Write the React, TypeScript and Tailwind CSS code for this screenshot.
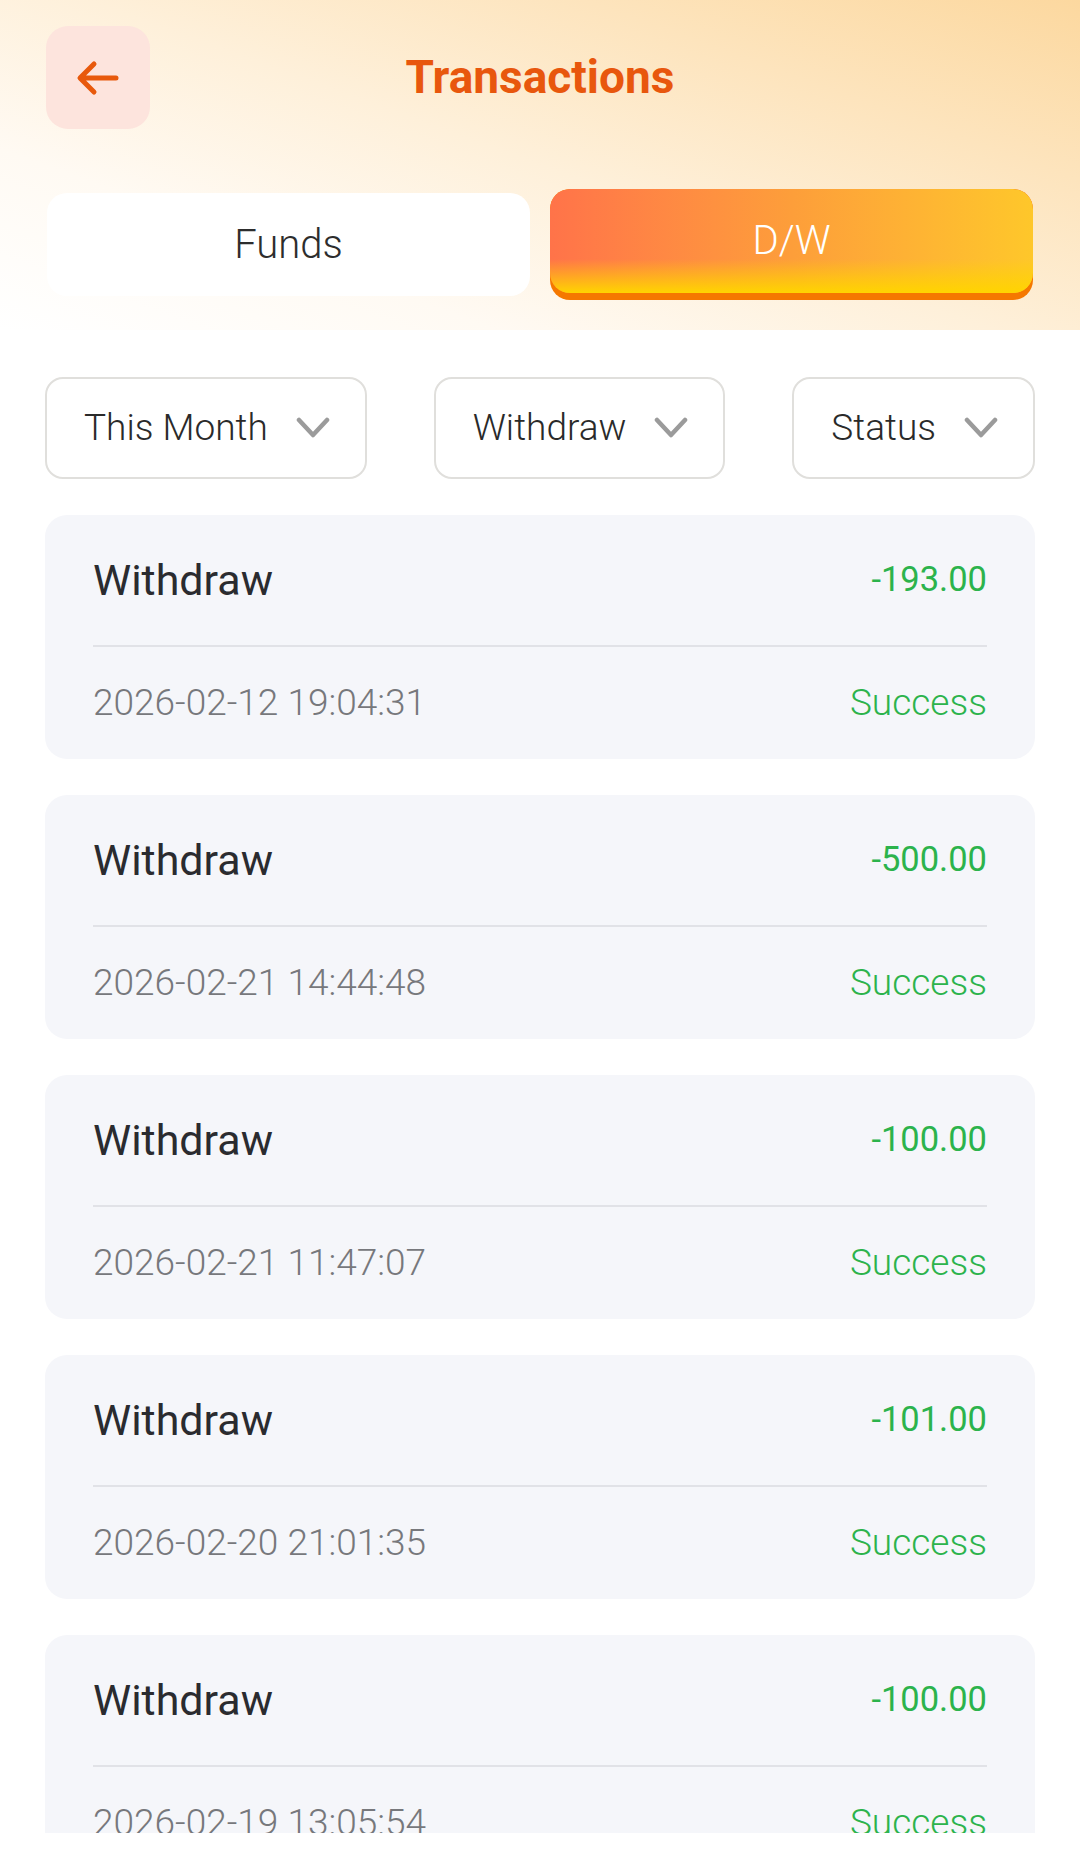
import React, { useState } from 'react';

type TRecord = {
  id: number;
  amount: string;
  date: string;
  status: string;
};

const records: TRecord[] = [
  { id: 1, amount: '-193.00', date: '2026-02-12 19:04:31', status: 'Success' },
  { id: 2, amount: '-500.00', date: '2026-02-21 14:44:48', status: 'Success' },
  { id: 3, amount: '-100.00', date: '2026-02-21 11:47:07', status: 'Success' },
  { id: 4, amount: '-101.00', date: '2026-02-20 21:01:35', status: 'Success' },
  { id: 5, amount: '-100.00', date: '2026-02-19 13:05:54', status: 'Success' },
];

function Chevron() {
  return (
    <svg width="34" height="22" viewBox="0 0 34 22" fill="none">
      <path
        d="M3 3 L17 18 L31 3"
        stroke="#9b9b9b"
        strokeWidth="4.5"
        strokeLinecap="round"
        strokeLinejoin="round"
      />
    </svg>
  );
}

function FilterSelect({ label }: { label: string }) {
  return (
    <button className="h-[102px] flex items-center gap-[28px] pl-[37px] pr-[35px] rounded-[18px] border-2 border-[#e0dfdc] bg-white">
      <span className="text-[37px] font-light text-[#2a2a2a]">{label}</span>
      <Chevron />
    </button>
  );
}

function RecordCard({ record }: { record: TRecord }) {
  return (
    <div className="shrink-0 h-[244px] rounded-[22px] bg-[#f5f6fa] px-[48px] flex flex-col">
      <div className="h-[130px] flex items-center justify-between">
        <span className="text-[43px] text-[#2a2b2f]">Withdraw</span>
        <span className="text-[34.5px] text-[#2cb34c]">{record.amount}</span>
      </div>
      <div className="h-[2px] bg-[#e1e2e7]"></div>
      <div className="h-[112px] flex items-center justify-between">
        <span className="text-[37px] font-light text-[#77787c]">
          {record.date}
        </span>
        <span className="text-[37px] font-light text-[#2cb34c]">
          {record.status}
        </span>
      </div>
    </div>
  );
}

export default function App() {
  const [tab, setTab] = useState<'funds' | 'dw'>('dw');

  return (
    <div className="w-[1080px] h-[1872px] bg-white overflow-hidden font-['Roboto','Liberation_Sans',sans-serif]">
      <header className="h-[330px] bg-[linear-gradient(200deg,#fcd89f_0%,#fde4bd_25%,#fef0da_50%,#fffaf3_75%,#ffffff_100%)]">
        <div className="pt-[26px] px-[46px] grid grid-cols-[104px_1fr_104px] items-center">
          <button className="w-[104px] h-[103px] rounded-[22px] bg-[#fde4dd] flex items-center justify-center">
            <svg width="44" height="36" viewBox="0 0 44 36" fill="none">
              <path
                d="M40 18 H5 M18 4 L4 18 L18 32"
                stroke="#e8590c"
                strokeWidth="5"
                strokeLinecap="round"
                strokeLinejoin="round"
              />
            </svg>
          </button>
          <h1 className="text-center text-[46px] font-bold text-[#e8570d]">
            Transactions
          </h1>
          <div></div>
        </div>
        <div className="mt-[60px] px-[47px] grid grid-cols-2 gap-[20px] items-start">
          <button
            onClick={() => setTab('funds')}
            className="mt-[4px] h-[103px] rounded-[20px] bg-white flex items-center justify-center"
          >
            <span className="text-[40px] font-light text-[#2d2d2d]">Funds</span>
          </button>
          <button
            onClick={() => setTab('dw')}
            className="relative h-[111px] rounded-[20px] overflow-hidden bg-[#f57800] pb-[7px]"
          >
            <div className="relative h-full rounded-[20px] overflow-hidden bg-linear-to-r from-[#ff7349] via-[#fd9e3a] to-[#fec72a] flex items-center justify-center">
              <div className="absolute inset-x-0 bottom-0 h-[34px] bg-linear-to-t from-[#ffd400] to-transparent"></div>
              <span className="relative text-[40px] font-light text-white">
                D/W
              </span>
            </div>
          </button>
        </div>
      </header>

      <div className="mt-[47px] px-[45px] flex justify-between">
        <FilterSelect label="This Month" />
        <FilterSelect label="Withdraw" />
        <FilterSelect label="Status" />
      </div>

      <div className="mt-[36px] mx-[45px] h-[1318px] overflow-hidden flex flex-col gap-[36px]">
        {tab === 'dw' &&
          records.map((record) => (
            <RecordCard key={record.id} record={record} />
          ))}
      </div>
    </div>
  );
}
